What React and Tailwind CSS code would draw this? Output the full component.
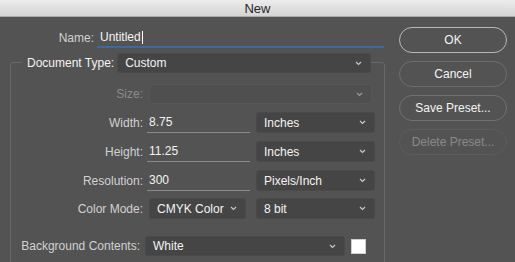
const Chevron = () => (
  <svg width="7" height="5" viewBox="0 0 7 5" className="shrink-0">
    <polyline points="1,1 3.5,3.5 6,1" fill="none" stroke="#c8c8c8" strokeWidth="1.2" />
  </svg>
);

const Select = ({ value, width, disabled = false, className = '' }) => (
  <div
    className={`flex items-center justify-between h-full rounded-[3px] pl-[7px] pr-[8px] ${
      disabled ? 'bg-[#4e4e4e] border border-[#5a5a5a]' : 'bg-[#454545] border border-[#4a4a4a]'
    } ${width} ${className}`}
  >
    <span className="text-[#f4f4f4] text-[12px] leading-none">{value}</span>
    <Chevron />
  </div>
);

const Field = ({ value }) => (
  <div className="ml-[4px] w-[103px] h-full flex items-center pl-[2px] border-b border-[#8c8c8c] text-[#f4f4f4] text-[12px]">
    {value}
  </div>
);

const Label = ({ children, width = 'w-[132px]', className = 'text-[#d2d2d2]' }) => (
  <div className={`${width} shrink-0 text-right text-[12px] ${className}`}>{children}</div>
);

const Button = ({ children, border, text = 'text-[#f4f4f4]' }) => (
  <div className={`h-[26px] rounded-full border ${border} flex items-center justify-center text-[12px] ${text}`}>
    {children}
  </div>
);

export default function App() {
  return (
    <div
      className="w-[515px] h-[262px] bg-[#535353] overflow-hidden"
      style={{ fontFamily: '"Liberation Sans", Arial, sans-serif' }}
    >
      <div className="h-[17px] bg-gradient-to-b from-[#ececec] to-[#d4d4d4] border-b border-[#a9a9a9] flex items-center justify-center text-[13px] text-[#262626] leading-none">
        New
      </div>
      <div className="flex">
        <div className="w-[390px] flex flex-col">
          <div className="mt-[11px] h-[20px] flex items-center">
            <Label width="w-[94px]">Name:</Label>
            <div className="ml-[3px] w-[287px] h-full flex items-center pl-[3px] border-b-2 border-[#41689b] text-[#f4f4f4] text-[12px]">
              Untitled<span className="inline-block w-px h-[13px] bg-white ml-px" />
            </div>
          </div>

          <div className="mt-[14px] ml-[10px] w-[375px] h-[220px] border border-[#686868] rounded-[3px]">
            <div className="-mt-[10px] h-[20px] flex items-center">
              <div className="ml-[11px] bg-[#535353] pl-[5px] pr-[3px] text-[12px] text-[#f4f4f4] h-full flex items-center">
                Document Type:
              </div>
              <Select value="Custom" width="w-[254px]" />
            </div>

            <div className="mt-[11px] h-[20px] flex items-center">
              <Label className="text-[#8c8c8c]">Size:</Label>
              <Select value="" width="w-[223px]" disabled className="ml-[6px] opacity-60" />
            </div>

            <div className="mt-[8px] h-[21px] flex items-center">
              <Label>Width:</Label>
              <Field value="8.75" />
              <Select value="Inches" width="w-[119px]" className="ml-[6px]" />
            </div>

            <div className="mt-[8px] h-[21px] flex items-center">
              <Label>Height:</Label>
              <Field value="11.25" />
              <Select value="Inches" width="w-[119px]" className="ml-[6px]" />
            </div>

            <div className="mt-[8px] h-[21px] flex items-center">
              <Label>Resolution:</Label>
              <Field value="300" />
              <Select value="Pixels/Inch" width="w-[119px]" className="ml-[6px]" />
            </div>

            <div className="mt-[7px] h-[21px] flex items-center">
              <Label>Color Mode:</Label>
              <Select value="CMYK Color" width="w-[97px]" className="ml-[6px]" />
              <Select value="8 bit" width="w-[119px]" className="ml-[10px]" />
            </div>

            <div className="mt-[17px] h-[20px] flex items-center">
              <Label width="w-[129px]">Background Contents:</Label>
              <Select value="White" width="w-[200px]" className="ml-[5px]" />
              <div className="ml-[6px] w-[15px] h-[15px] bg-white border border-[#cfcfcf]" />
            </div>
          </div>
        </div>

        <div className="ml-[9px] w-[108px] pt-[10px] flex flex-col gap-[8px]">
          <Button border="border-[#b8b8b8] border-[1.5px]">OK</Button>
          <Button border="border-[#6e6e6e]">Cancel</Button>
          <Button border="border-[#717171]">Save Preset...</Button>
          <Button border="border-[#5c5c5c]" text="text-[#8a8a8a]">Delete Preset...</Button>
        </div>
      </div>
    </div>
  );
}
